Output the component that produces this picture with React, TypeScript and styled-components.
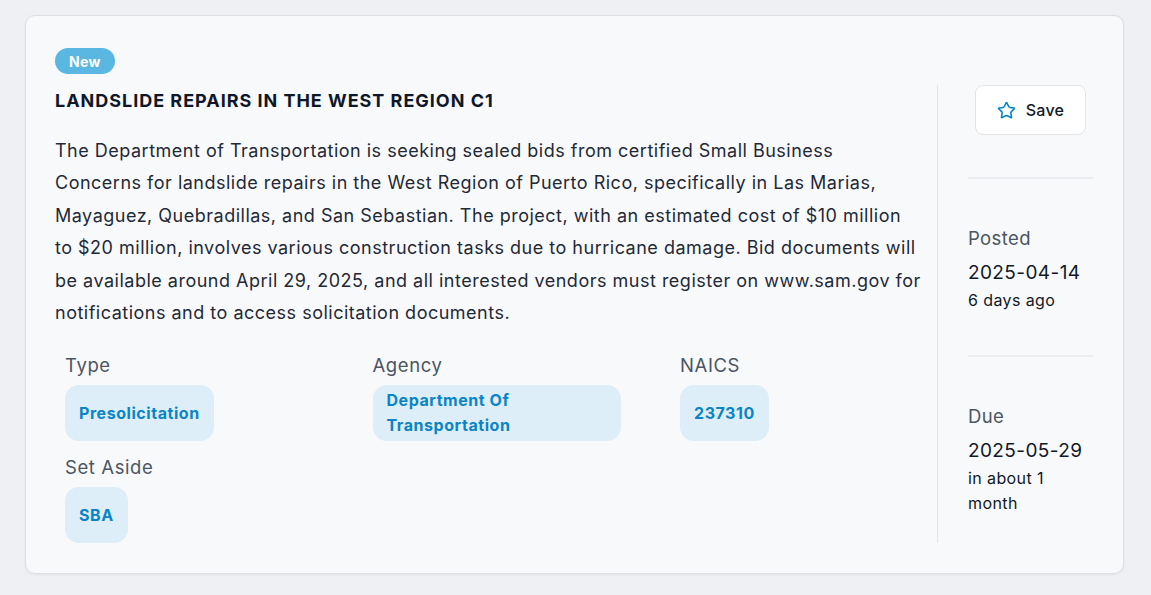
import React from "react";
import styled, { createGlobalStyle } from "styled-components";
import { Star } from "lucide-react";

const Global = createGlobalStyle`
  html, body { margin: 0; padding: 0; }
  body {
    background: #eff0f3;
    font-family: Inter, "Noto Sans", sans-serif;
    color: #111827;
    -webkit-font-smoothing: antialiased;
  }
`;

const Page = styled.div`
  padding: 15px 27px 21px 25px;
`;

const Card = styled.article`
  background: #f8f9fb;
  border: 1px solid #dcdee2;
  border-radius: 10px;
  box-shadow: 0 1px 3px rgba(0, 0, 0, 0.05);
  padding: 32px 30px 30px 29px;
  display: flex;
  gap: 14px;
`;

const Main = styled.div`
  flex: 1;
  min-width: 0;
`;

const Badge = styled.span`
  display: inline-flex;
  align-items: center;
  height: 26px;
  padding: 0 14px;
  border-radius: 13px;
  background: #5ab7e2;
  color: #fff;
  font-size: 14px;
  font-weight: 700;
  letter-spacing: 0.3px;
`;

const Title = styled.h2`
  margin: 15px 0 0;
  font-size: 18px;
  line-height: 24px;
  font-weight: 700;
  letter-spacing: 0.98px;
  text-transform: uppercase;
  color: #0f172a;
`;

const Description = styled.p`
  margin: 22px 0 0;
  font-size: 18px;
  line-height: 1.8;
  letter-spacing: 0.5px;
  color: #1f2937;
`;

const MetaGrid = styled.div`
  margin-top: 24px;
  padding-left: 10px;
  display: grid;
  grid-template-columns: repeat(3, 307.5px);
  row-gap: 14px;
`;

const MetaItem = styled.div`
  display: flex;
  flex-direction: column;
  align-items: flex-start;
  gap: 8px;
`;

const MetaLabel = styled.div`
  font-size: 18.5px;
  line-height: 24px;
  letter-spacing: 0.6px;
  color: #4b5563;
`;

const Chip = styled.span`
  display: flex;
  align-items: center;
  min-height: 56px;
  box-sizing: border-box;
  max-width: 248px;
  padding: 3px 14px;
  border-radius: 14px;
  background: #ddeef9;
  color: #0a84c7;
  font-size: 16px;
  font-weight: 700;
  line-height: 25px;
  letter-spacing: 0.55px;
`;

const Aside = styled.aside`
  width: 125px;
  margin-top: 37px;
  padding-left: 30px;
  border-left: 1px solid #e3e5e8;
  display: flex;
  flex-direction: column;
`;

const SaveButton = styled.button`
  align-self: center;
  display: flex;
  align-items: center;
  gap: 10px;
  height: 50px;
  padding: 0 21px;
  background: #fff;
  border: 1px solid #e2e4e8;
  border-radius: 8px;
  font-family: inherit;
  font-size: 16px;
  font-weight: 500;
  letter-spacing: 0.3px;
  color: #111827;
  cursor: pointer;
`;

const Separator = styled.hr`
  width: 100%;
  margin: 42px 0 47px;
  border: 0;
  height: 2px;
  background: #eceef1;
`;

const DateLabel = styled.div`
  font-size: 18.5px;
  line-height: 24px;
  letter-spacing: 0.4px;
  color: #4b5563;
`;

const DateValue = styled.div`
  margin-top: 11px;
  font-size: 19px;
  line-height: 24px;
  letter-spacing: 0.4px;
  color: #111827;
`;

const DateRelative = styled.div`
  margin-top: 3px;
  font-size: 16px;
  line-height: 25px;
  letter-spacing: 0.4px;
  color: #111827;
`;

const meta = [
  { label: "Type", value: "Presolicitation" },
  { label: "Agency", value: "Department Of Transportation" },
  { label: "NAICS", value: "237310" },
  { label: "Set Aside", value: "SBA" },
];

export default function App() {
  return (
    <>
      <Global />
      <Page>
        <Card>
          <Main>
            <Badge>New</Badge>
            <Title>Landslide Repairs in the West Region C1</Title>
            <Description>
              The Department of Transportation is seeking sealed bids from certified Small Business
              Concerns for landslide repairs in the West Region of Puerto Rico, specifically in Las
              Marias, Mayaguez, Quebradillas, and San Sebastian. The project, with an estimated cost
              of $10 million to $20 million, involves various construction tasks due to hurricane
              damage. Bid documents will be available around April 29, 2025, and all interested
              vendors must register on www.sam.gov for notifications and to access solicitation
              documents.
            </Description>
            <MetaGrid>
              {meta.map((m) => (
                <MetaItem key={m.label}>
                  <MetaLabel>{m.label}</MetaLabel>
                  <Chip>{m.value}</Chip>
                </MetaItem>
              ))}
            </MetaGrid>
          </Main>
          <Aside>
            <SaveButton>
              <Star size={19} color="#0284c7" strokeWidth={2} />
              Save
            </SaveButton>
            <Separator />
            <DateLabel>Posted</DateLabel>
            <DateValue>2025-04-14</DateValue>
            <DateRelative>6 days ago</DateRelative>
            <Separator />
            <DateLabel>Due</DateLabel>
            <DateValue>2025-05-29</DateValue>
            <DateRelative>in about 1 month</DateRelative>
          </Aside>
        </Card>
      </Page>
    </>
  );
}
